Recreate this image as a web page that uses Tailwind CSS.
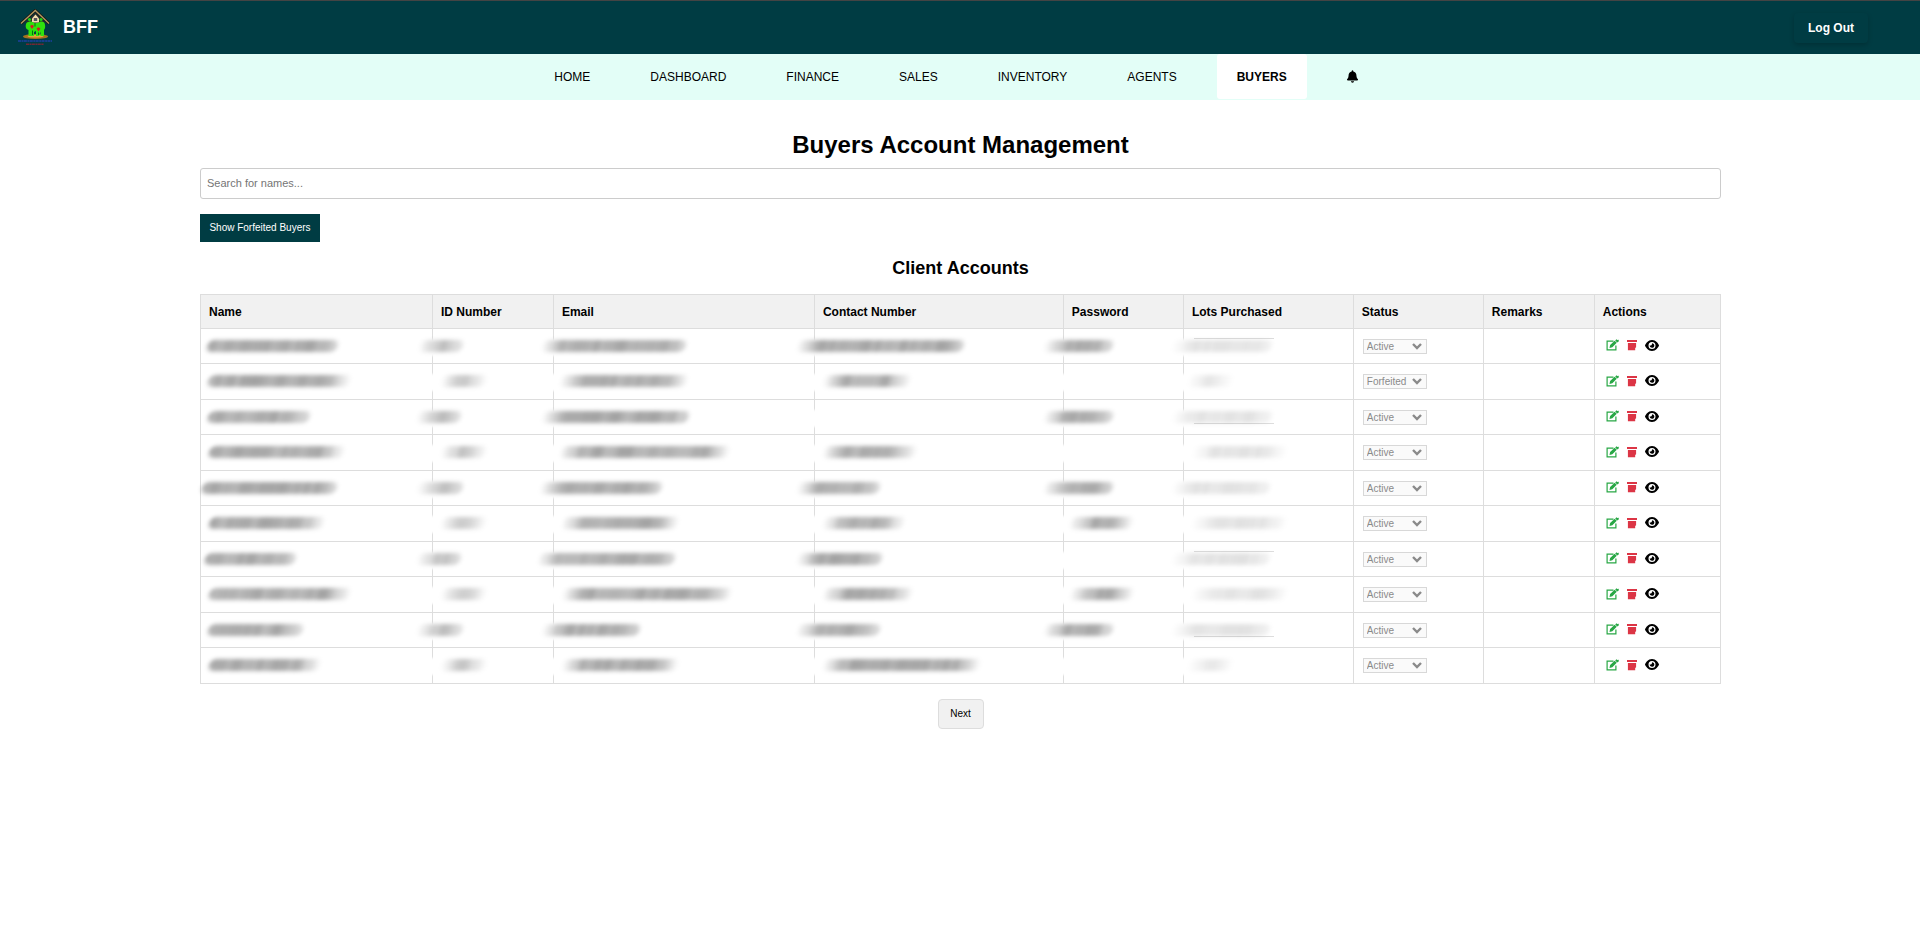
<!DOCTYPE html>
<html lang="en">
<head>
<meta charset="utf-8">
<meta name="viewport" content="width=device-width, initial-scale=1">
<title>BFF - Buyers Account Management</title>
<script src="https://cdn.jsdelivr.net/npm/@tailwindcss/browser@4"></script>
</head>
<body class="min-h-screen bg-white font-['Liberation_Sans',Arial,sans-serif] text-xs text-black">

<svg class="hidden" aria-hidden="true">
  <symbol id="icon-edit" viewBox="0 0 26 24">
    <path fill="none" stroke="currentColor" stroke-width="2.400" d="M15 4.200H2.200v17.600h17.600V13"/>
    <path fill="currentColor" d="M7 18l1.200-6L17.300 3.500l4.200 4.200-8.800 9zM18.400 2.800l2.600-2.300 1.600 1.500L25.500 1.700V5L22.300 7z"/>
  </symbol>
  <symbol id="icon-archive" viewBox="0 0 22 24">
    <path fill="currentColor" d="M0 1h22v4.600H0zM2 7.400h18v9.600l-2 1.500V23.500H2z"/>
  </symbol>
  <symbol id="icon-eye" viewBox="0 0 576 512">
    <path fill="currentColor" d="M288 32c-80.800 0-145.500 36.800-192.600 80.600C48.600 156 17.300 208 2.500 243.700c-3.300 7.900-3.300 16.700 0 24.600C17.300 304 48.600 356 95.400 399.400C142.500 443.200 207.200 480 288 480s145.500-36.800 192.600-80.600c46.800-43.500 78.100-95.400 93-131.100c3.300-7.900 3.300-16.700 0-24.600c-14.900-35.700-46.200-87.700-93-131.100C433.500 68.800 368.800 32 288 32zM144 256a144 144 0 1 1 288 0 144 144 0 1 1 -288 0zm144-64c0 35.300-28.700 64-64 64c-7.100 0-13.900-1.200-20.300-3.300c-5.500-1.800-11.900 1.600-11.700 7.400c.3 6.900 1.300 13.800 3.200 20.700c13.700 51.200 66.400 81.600 117.600 67.900s81.600-66.400 67.900-117.600c-11.100-41.500-47.800-69.400-88.600-71.100c-5.800-.2-9.200 6.100-7.400 11.700c2.100 6.400 3.300 13.200 3.300 20.300z"/>
  </symbol>
</svg>

<header class="flex h-[54px] items-center justify-between border-t border-[#444] bg-[#003c43] pr-[52px] pl-[18px] text-white">
  <div class="flex items-center gap-[10px]">
    <svg class="h-[37px] w-[35px]" viewBox="0 0 35 37" role="img" aria-label="BFF logo">
      <ellipse cx="17.500" cy="27.500" rx="12.500" ry="2.600" fill="#a8731c"/>
      <ellipse cx="17.500" cy="27.200" rx="8" ry="1.400" fill="#e0a53a"/>
      <path d="M8 13.500L17.500 4 27 13.500V15H8z" fill="#2b2a26"/>
      <path d="M3 14.500L17.300 1.500 31 14.500" fill="none" stroke="#1a1712" stroke-width="3"/>
      <path d="M3 14.500L17.300 1.500 31 14.500" fill="none" stroke="#b49a62" stroke-width="1.300"/>
      <path d="M14 9.500L17.500 5.500 21 9.500V13.500h-7z" fill="#f2dfae"/>
      <path d="M15.800 9h3.400v3h-3.400z" fill="#54515a"/>
      <circle cx="11.500" cy="10.500" r="1.600" fill="#23d413"/>
      <circle cx="23" cy="10.500" r="1.600" fill="#23d413"/>
      <path d="M8.500 14c2-2 6-2 7.500 0h4c2-2 5-2 6.500 0 1 3 1 5-.5 7v6h-3.500v-4.500L21 27h-3v-5l-2 1v4h-5.500v-6C7.500 20 7 17 8.500 14z" fill="#2fe30d"/>
      <path d="M12 17l2-1.200L16 17l-2 3zM18.500 19.500l2-1.200 2 1.200-2 3z" fill="#d11f1f"/>
      <path d="M17 14v3.500M14.500 21.500V26M20.500 23.500V26" stroke="#0b6b12" stroke-width="1"/>
      <path d="M0 32h34" stroke="#1f3fa8" stroke-width="1.800" stroke-dasharray="3 .5 2 .4" opacity=".7"/>
      <path d="M8 35.200h18" stroke="#a81f2c" stroke-width="1.600" stroke-dasharray="3 .5 2 .4" opacity=".7"/>
    </svg>
    <span class="pb-[2px] text-lg font-bold">BFF</span>
  </div>
  <button type="button" class="h-[30px] w-[74px] rounded-[4px] bg-[#003c43] font-bold shadow-[0_2px_5px_rgba(0,0,0,0.2)]">Log Out</button>
</header>

<nav class="flex h-[46px] items-start justify-center gap-5 bg-[#e3fef7] pr-2">
  <a href="#" class="flex h-[45px] items-center px-5">HOME</a>
  <a href="#" class="flex h-[45px] items-center px-5">DASHBOARD</a>
  <a href="#" class="flex h-[45px] items-center px-5">FINANCE</a>
  <a href="#" class="flex h-[45px] items-center px-5">SALES</a>
  <a href="#" class="flex h-[45px] items-center px-5">INVENTORY</a>
  <a href="#" class="flex h-[45px] items-center px-5">AGENTS</a>
  <a href="#" aria-current="page" class="flex h-[45px] items-center rounded-[3px] bg-white px-5 font-bold">BUYERS</a>
  <a href="#" aria-label="Notifications" class="flex h-[45px] items-center px-5">
    <svg class="h-[13px] w-[11px]" viewBox="0 0 448 512" fill="currentColor" aria-hidden="true"><path d="M224 0c-17.700 0-32 14.300-32 32v19.200C119 66 64 130.600 64 208v18.800c0 47-17.300 92.400-48.500 127.600l-7.400 8.300c-8.400 9.400-10.400 22.900-5.300 34.400S19.400 416 32 416H416c12.600 0 24-7.400 29.200-18.900s3.100-25-5.300-34.400l-7.400-8.300C401.300 319.200 384 273.900 384 226.800V208c0-77.400-55-142-128-156.800V32c0-17.700-14.300-32-32-32zm45.300 493.300c12-12 18.700-28.300 18.700-45.300H160c0 17 6.700 33.300 18.700 45.300s28.300 18.700 45.300 18.700s33.300-6.700 45.300-18.700z"/></svg>
  </a>
</nav>

<main class="pt-[29px] pr-[199px] pb-8 pl-[200px]">
  <h1 class="text-center text-2xl font-bold">Buyers Account Management</h1>
  <input type="text" aria-label="Search for names" placeholder="Search for names..." class="mt-[7px] block h-[31px] w-full rounded-[3px] border border-[#ccc] px-[6px] pb-[2px] text-[11px] placeholder:text-[#757575]">
  <button type="button" class="mt-[15px] block h-7 w-30 bg-[#003c43] text-[10px] text-white">Show Forfeited Buyers</button>
  <h2 class="mt-3 text-center text-lg font-bold">Client Accounts</h2>

  <table class="mt-3 w-full table-fixed border-collapse text-left">
    <colgroup>
      <col class="w-[15.260%]"><col class="w-[7.960%]"><col class="w-[17.170%]"><col class="w-[16.380%]"><col class="w-[7.900%]"><col class="w-[11.180%]"><col class="w-[8.550%]"><col class="w-[7.300%]"><col class="w-[8.300%]">
    </colgroup>
    <thead>
      <tr class="h-[34px] bg-[#f1f1f1]">
        <th class="border border-[#ddd] px-2">Name</th>
        <th class="border border-[#ddd] px-2">ID Number</th>
        <th class="border border-[#ddd] px-2">Email</th>
        <th class="border border-[#ddd] px-2">Contact Number</th>
        <th class="border border-[#ddd] px-2">Password</th>
        <th class="border border-[#ddd] px-2">Lots Purchased</th>
        <th class="border border-[#ddd] px-2">Status</th>
        <th class="border border-[#ddd] px-2">Remarks</th>
        <th class="border border-[#ddd] px-2">Actions</th>
      </tr>
    </thead>
    <tbody id="buyers"></tbody>
  </table>

  <div class="mt-[15px] flex justify-center">
    <button type="button" class="h-[30px] w-[46px] rounded-[4px] border border-[#ddd] bg-[#f1f1f1] text-[10px]">Next</button>
  </div>
</main>

<script>
  // Redacted values per row: [start, end] of each smudge from its cell's left edge; null is empty.
  // Order: name, id, email, contact, password, lots.
  const redacted = [
    [[6, 137], [-14, 30], [-12, 132], [-18, 149], [-20, 49], [-12, 88]],
    [[7, 150], [8, 54], [6, 134], [8, 96], null, [4, 50]],
    [[7, 109], [-16, 28], [-12, 135], null, [-20, 49], [-12, 88]],
    [[8, 144], [8, 54], [6, 176], [8, 102], null, [8, 104]],
    [[1, 136], [-16, 30], [-14, 108], [-18, 65], [-20, 49], [-12, 86]],
    [[8, 124], [8, 54], [8, 125], [8, 90], [6, 70], [8, 104]],
    [[4, 95], [-16, 28], [-16, 121], [-18, 67], null, [-12, 86]],
    [[8, 150], [8, 54], [8, 178], [8, 98], [6, 70], [8, 104]],
    [[7, 102], [-16, 30], [-12, 86], [-18, 65], [-20, 49], [-12, 86]],
    [[8, 120], [8, 54], [8, 125], [8, 166], null, [4, 50]]
  ];
  let seed = 7;
  const random = () => (seed = (seed * 16807) % 2147483647) / 2147483647;

  const topEdge = '<span class="absolute top-[9px] left-[10px] h-2 w-20 border-t border-[#ddd]"></span>';
  const bottomEdge = '<span class="absolute top-[16px] left-[10px] h-2 w-20 border-b border-[#ddd]"></span>';
  const lotEdges = { 0: topEdge, 2: bottomEdge, 6: topEdge, 8: bottomEdge };

  function smudge(range, col, row) {
    const mask = col > 0 ? '<span class="absolute top-[10px] -left-1 h-[17px] w-2 bg-white blur-[1px]"></span>' : '';
    if (!range) return mask;
    const width = range[1] - range[0];
    const peak = col === 5 ? 0.11 : col === 1 ? 0.26 : 0.34;
    const steps = Math.max(6, Math.round(width / 5));
    const stops = [];
    for (let i = 0; i <= steps; i++) {
      const x = width * i / steps;
      const head = col > 0 ? Math.min(1, x / 22) : 1;
      const tail = row % 2 ? Math.min(1, (width - x) / 24) : Math.min(1, (width - x) / 30 + 0.4);
      stops.push(`rgba(0,0,0,${(peak * head * tail * (0.78 + random() * 0.3)).toFixed(3)})`);
    }
    return mask + (col === 5 && lotEdges[row] || '') +
      `<span class="absolute top-[11px] h-3 -skew-x-12 rounded-[6px] blur-[2px]" style="left:${range[0]}px;width:${width}px;background:linear-gradient(90deg,${stops.join(',')})"></span>`;
  }

  document.getElementById('buyers').innerHTML = redacted.map((cells, row) => {
    const status = row === 1 ? 'Forfeited' : 'Active';
    return `<tr class="odd:h-[35px] even:h-[36px]">
      ${cells.map((range, col) => `<td class="relative border border-[#ddd] p-0">${smudge(range, col, row)}</td>`).join('')}
      <td class="border border-[#ddd] px-[9px] py-0">
        <div class="relative w-16">
          <select disabled aria-label="Status of buyer ${row + 1}" class="block h-[15px] w-full appearance-none border border-[#d8d8d8] bg-[#fafafa] pl-[3px] text-[10px] leading-[13px] text-[#8a8a8a] opacity-100">
            <option${status === 'Active' ? ' selected' : ''}>Active</option>
            <option${status === 'Forfeited' ? ' selected' : ''}>Forfeited</option>
          </select>
          <svg class="pointer-events-none absolute top-1 right-[5px] h-[7px] w-[10px]" viewBox="0 0 10 7" fill="none" stroke="#8a8a8a" stroke-width="2.400" aria-hidden="true"><path d="M1 1l4 4 4-4"/></svg>
        </div>
      </td>
      <td class="border border-[#ddd] p-0"></td>
      <td class="border border-[#ddd] px-[11px] pt-0 pb-[2px]">
        <div class="flex items-center gap-2">
          <button type="button" aria-label="Edit buyer ${row + 1}" class="text-[#28a745]"><svg class="h-3 w-[13px]"><use href="#icon-edit"/></svg></button>
          <button type="button" aria-label="Archive buyer ${row + 1}" class="text-[#dc3545]"><svg class="h-3 w-[10px]"><use href="#icon-archive"/></svg></button>
          <button type="button" aria-label="View buyer ${row + 1}"><svg class="h-[13px] w-[14px]"><use href="#icon-eye"/></svg></button>
        </div>
      </td>
    </tr>`;
  }).join('');
</script>
</body>
</html>
